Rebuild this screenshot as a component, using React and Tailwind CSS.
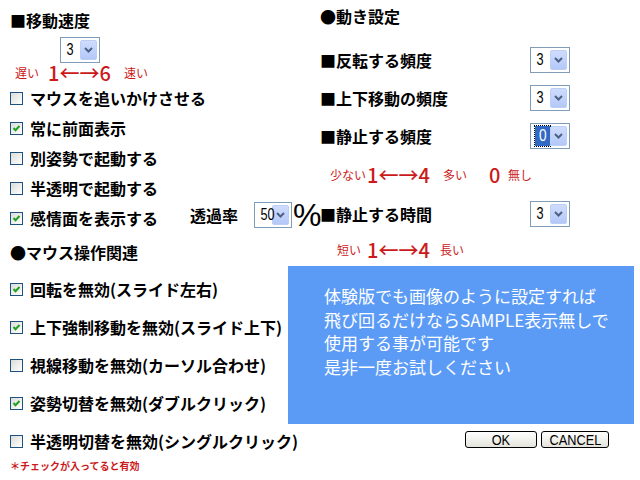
import React from "react";

const JP = { fontFamily: '"Noto Sans CJK JP", "Noto Sans", sans-serif' };

function Chevron() {
  return (
    <svg width="9" height="6" viewBox="0 0 9 6">
      <path d="M1 1 L4.5 4.5 L8 1" stroke="#4d6185" strokeWidth="2" fill="none" />
    </svg>
  );
}

function Select({ value, className = "w-[40px]", focused = false }) {
  return (
    <div className={`h-[26px] border border-[#7f9db9] bg-white flex items-stretch p-[2px] shrink-0 ${className}`}>
      <div className="flex-1 flex items-center pl-[2px] min-w-0">
        {focused ? (
          <span className="h-full w-[16px] bg-[#316ac5] text-white outline outline-1 outline-dotted outline-black flex items-center justify-center text-[17px] font-['Liberation_Sans',sans-serif]">
            <span className="inline-block scale-x-[0.8]">{value}</span>
          </span>
        ) : (
          <span className="pl-[2px] text-[17px] text-black font-['Liberation_Sans',sans-serif] inline-block origin-left scale-x-[0.75] whitespace-nowrap">{value}</span>
        )}
      </div>
      <div className="w-[17px] shrink-0 rounded-[2px] bg-linear-to-b from-[#cfdcfd] to-[#b4c8f8] border border-[#bccdf6] flex items-center justify-center">
        <Chevron />
      </div>
    </div>
  );
}

function Checkbox({ checked }) {
  return (
    <div className="w-[13px] h-[13px] border border-[#1c5180] bg-linear-to-br from-[#dcdcd7] to-white flex items-center justify-center shrink-0">
      {checked && (
        <svg width="9" height="9" viewBox="0 0 9 9">
          <path d="M1.5 4 L3.5 6.2 L7.5 2" stroke="#21a121" strokeWidth="2" fill="none" />
        </svg>
      )}
    </div>
  );
}

function CheckRow({ checked, label, h = "h-[30px]", children }) {
  return (
    <div className={`${h} flex items-center whitespace-nowrap`}>
      <Checkbox checked={checked} />
      <span className="ml-[7px] text-[16px] font-bold text-black shrink-0">{label}</span>
      {children}
    </div>
  );
}

export default function App() {
  return (
    <div className="w-[640px] h-[480px] bg-white flex overflow-hidden" style={JP}>
      {/* Left column */}
      <div className="w-[288px] shrink-0 pl-[10px] flex flex-col">
        <div className="h-[36px] pt-[4px] flex items-center text-[16px] font-bold text-black">■移動速度</div>
        <div className="mt-[1px] ml-[50px]">
          <Select value="3" className="w-[40px]" />
        </div>
        <div className="h-[20px] flex items-center text-[#cc1a1a] whitespace-nowrap">
          <span className="ml-[5px] w-[33px] shrink-0 text-[12px]">遅い</span>
          <span className="w-[76px] shrink-0 text-[20px] font-medium leading-none">1←→6</span>
          <span className="text-[12px]">速い</span>
        </div>
        <CheckRow checked={false} label="マウスを追いかけさせる" />
        <CheckRow checked={true} label="常に前面表示" />
        <CheckRow checked={false} label="別姿勢で起動する" />
        <CheckRow checked={false} label="半透明で起動する" />
        <div className="h-[30px] flex items-center whitespace-nowrap">
          <Checkbox checked={true} />
          <span className="ml-[7px] w-[160px] shrink-0 text-[16px] font-bold text-black">感情面を表示する</span>
          <div className="flex items-center shrink-0 -translate-y-[3px]">
            <span className="w-[64px] shrink-0 text-[16px] font-bold text-black">透過率</span>
            <Select value="50" className="w-[38px]" />
            <span className="ml-[1px] text-[32px] leading-none text-black font-['Liberation_Sans',sans-serif]">%</span>
          </div>
        </div>
        <div className="h-[37px] flex items-center text-[16px] font-bold text-black">●マウス操作関連</div>
        <CheckRow checked={true} label="回転を無効(スライド左右)" h="h-[38px]" />
        <CheckRow checked={true} label="上下強制移動を無効(スライド上下)" h="h-[38px]" />
        <CheckRow checked={false} label="視線移動を無効(カーソル合わせ)" h="h-[38px]" />
        <CheckRow checked={true} label="姿勢切替を無効(ダブルクリック)" h="h-[38px]" />
        <CheckRow checked={false} label="半透明切替を無効(シングルクリック)" h="h-[38px]" />
        <div className="h-[10px] flex items-center text-[10px] font-bold text-[#cc1a1a] whitespace-nowrap">＊チェックが入ってると有効</div>
      </div>

      {/* Right column */}
      <div className="flex-1 flex flex-col">
        <div className="h-[32px] pl-[32px] flex items-center text-[16px] font-bold text-black">●動き設定</div>
        <div className="mt-[9px]" />
        {[
          ["■反転する頻度", "3", false],
          ["■上下移動の頻度", "3", false],
          ["■静止する頻度", "0", true],
        ].map(([label, v, f]) => (
          <div key={label} className="h-[38px] pl-[32px] flex items-center">
            <span className="w-[210px] shrink-0 text-[16px] font-bold text-black">{label}</span>
            <Select value={v} focused={f} />
          </div>
        ))}
        <div className="h-[40px] pl-[42px] flex items-center text-[#cc1a1a] whitespace-nowrap">
          <span className="w-[37px] shrink-0 text-[12px]">少ない</span>
          <span className="w-[76px] shrink-0 text-[20px] font-medium leading-none">1←→4</span>
          <span className="w-[46px] shrink-0 text-[12px]">多い</span>
          <span className="w-[19px] shrink-0 text-[20px] font-medium leading-none">0</span>
          <span className="text-[12px]">無し</span>
        </div>
        <div className="h-[38px] pl-[32px] flex items-center">
          <span className="w-[210px] shrink-0 text-[16px] font-bold text-black">■静止する時間</span>
          <Select value="3" />
        </div>
        <div className="h-[33px] pl-[49px] flex items-center text-[#cc1a1a] whitespace-nowrap">
          <span className="w-[30px] shrink-0 text-[12px]">短い</span>
          <span className="w-[73px] shrink-0 text-[20px] font-medium leading-none">1←→4</span>
          <span className="text-[12px]">長い</span>
        </div>
        <div className="w-[346px] h-[158px] bg-[#5b9bf6] pl-[36px] pt-[18px] text-white text-[17px] leading-[23.5px] whitespace-nowrap">
          <div>体験版でも画像のように設定すれば</div>
          <div>飛び回るだけならSAMPLE表示無しで</div>
          <div>使用する事が可能です</div>
          <div>是非一度お試しください</div>
        </div>
        <div className="mt-[7px] pl-[177px] flex gap-[4px] font-['Liberation_Sans',sans-serif]">
          <div className="w-[72px] h-[17px] border border-black rounded-[3px] bg-linear-to-b from-white to-[#e4e4dc] flex items-center justify-center text-[15px] leading-none text-black">
            <span className="inline-block scale-x-[0.85]">OK</span>
          </div>
          <div className="w-[68px] h-[17px] border border-black rounded-[3px] bg-linear-to-b from-white to-[#e4e4dc] flex items-center justify-center text-[15px] leading-none text-black">
            <span className="inline-block scale-x-[0.85]">CANCEL</span>
          </div>
        </div>
      </div>
    </div>
  );
}
